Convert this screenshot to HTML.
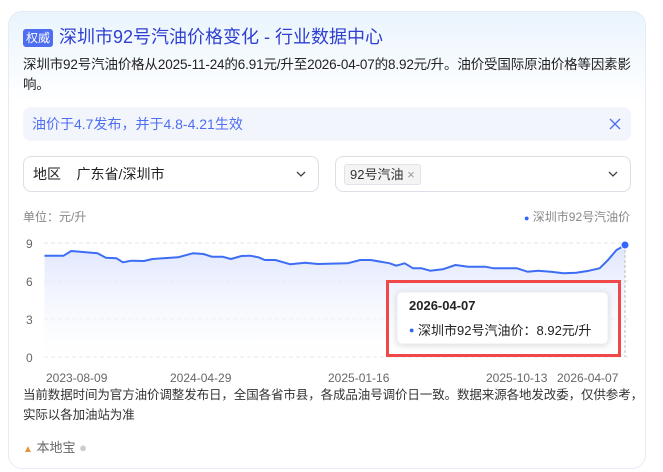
<!DOCTYPE html>
<html><head><meta charset="utf-8"><style>
*{margin:0;padding:0;box-sizing:border-box}
body{width:663px;height:472px;background:#fff;font-family:"Liberation Sans","Noto Sans CJK SC",sans-serif;position:relative;overflow:hidden;color:#222}
.card{position:absolute;left:8px;top:11px;width:638px;height:458px;border:1px solid #e6ebf5;border-radius:14px;background:linear-gradient(180deg,#eaf4fd 0,#fff 90px)}
.a{position:absolute;white-space:nowrap}
.badge{left:23px;top:29px;background:#4e6ef2;color:#fff;font-size:12px;padding:1px 3px;border-radius:3px;line-height:16px}
.title{left:59px;top:25px;font-size:18px;color:#2f3fd0;line-height:24px}
.desc{left:23px;top:55px;font-size:13.5px;line-height:20px;color:#222;letter-spacing:-0.15px}
.notice{left:23px;top:107px;width:608px;height:34px;background:#f3f5fc;border-radius:8px;color:#4e6ef2;font-size:14px;line-height:34px;padding-left:9px}
.sel{top:156px;height:36px;border:1px solid #dcdfe6;border-radius:8px;background:#fff;font-size:14px;line-height:34px}
.tag{position:absolute;left:8px;top:7px;height:21px;line-height:19px;background:#f4f4f5;border:1px solid #e1e3e8;border-radius:3px;font-size:13px;padding:0 5px;color:#333}
.ax{font-size:12px;color:#666}
</style></head><body>
<div class="card"></div>
<div class="a badge">权威</div>
<div class="a title">深圳市92号汽油价格变化 - 行业数据中心</div>
<div class="a desc">深圳市92号汽油价格从2025-11-24的6.91元/升至2026-04-07的8.92元/升。油价受国际原油价格等因素影<br>响。</div>
<div class="a notice">油价于4.7发布，并于4.8-4.21生效
<svg style="position:absolute;right:10px;top:11px" width="12" height="12"><path d="M1 1L11 11M11 1L1 11" stroke="#4e6ef2" stroke-width="1.4"/></svg></div>
<div class="a sel" style="left:23px;width:296px;padding-left:9px">地区&nbsp;&nbsp;&nbsp;&nbsp;广东省/深圳市
<svg style="position:absolute;right:12px;top:14px" width="10" height="7"><path d="M1 1L5 5L9 1" stroke="#444" fill="none" stroke-width="1.3"/></svg></div>
<div class="a sel" style="left:335px;width:296px"><span class="tag">92号汽油 <span style="color:#999">×</span></span>
<svg style="position:absolute;right:12px;top:14px" width="10" height="7"><path d="M1 1L5 5L9 1" stroke="#444" fill="none" stroke-width="1.3"/></svg></div>
<div class="a ax" style="left:23px;top:208px;color:#888">单位：元/升</div>
<div class="a ax" style="left:524px;top:208px;color:#888"><span style="color:#3366ff;font-size:9px">●</span> 深圳市92号汽油价</div>
<div class="a ax" style="left:26px;top:237px">9</div>
<div class="a ax" style="left:26px;top:275px">6</div>
<div class="a ax" style="left:26px;top:313px">3</div>
<div class="a ax" style="left:26px;top:351px">0</div>
<svg class="a" style="left:0;top:0" width="663" height="472">
<defs><linearGradient id="g" x1="0" y1="0" x2="0" y2="1"><stop offset="0" stop-color="#dfe6fd"/><stop offset="1" stop-color="#fff" stop-opacity="0.3"/></linearGradient></defs>
<g stroke="#e6e6e6" stroke-dasharray="4 3"><line x1="44" y1="243" x2="628" y2="243"/><line x1="44" y1="281" x2="628" y2="281"/><line x1="44" y1="319" x2="628" y2="319"/><line x1="44" y1="357" x2="628" y2="357"/></g>
<path d="M44.5,255.7 L63.6,255.7 71.2,251 97.5,253.3 105.9,257.7 116.5,258.3 122.9,262.3 131.4,260.7 144.1,261 152.5,259 178,257.3 192.8,253.3 203.4,254 211.9,256.7 222.5,256.7 230.9,259 241.5,256 250,255.7 258.5,257.3 264.8,260 275.4,260 290.3,264.3 305.1,262.7 317.8,264 347.5,263.3 360.2,260 370.8,260 389.8,263.3 396.2,265.7 404.7,263.3 413.1,268.3 421.6,268.3 430.1,270.7 442.8,269.3 455.5,265 468.2,266.7 485.2,266.7 493.6,268.3 517,268.3 527.5,271.7 538.1,270.7 550.8,271.7 563.6,273.3 576.3,272.7 589,270.7 599.6,268.3 608,260 616.5,250 625,245.3 L625,357 L44.5,357Z" fill="url(#g)"/>
<path d="M44.5,255.7 L63.6,255.7 71.2,251 97.5,253.3 105.9,257.7 116.5,258.3 122.9,262.3 131.4,260.7 144.1,261 152.5,259 178,257.3 192.8,253.3 203.4,254 211.9,256.7 222.5,256.7 230.9,259 241.5,256 250,255.7 258.5,257.3 264.8,260 275.4,260 290.3,264.3 305.1,262.7 317.8,264 347.5,263.3 360.2,260 370.8,260 389.8,263.3 396.2,265.7 404.7,263.3 413.1,268.3 421.6,268.3 430.1,270.7 442.8,269.3 455.5,265 468.2,266.7 485.2,266.7 493.6,268.3 517,268.3 527.5,271.7 538.1,270.7 550.8,271.7 563.6,273.3 576.3,272.7 589,270.7 599.6,268.3 608,260 616.5,250 625,245.3" fill="none" stroke="#3d6df5" stroke-width="2" stroke-linejoin="round"/>
<line x1="625" y1="245" x2="625" y2="357" stroke="#bbb" stroke-dasharray="3 2"/>
<circle cx="625" cy="245" r="4" fill="#3366ff" stroke="#fff" stroke-width="1"/>
<rect x="397" y="292" width="211" height="52" rx="5" fill="#fff" stroke="#eee" style="filter:drop-shadow(0 1px 3px rgba(0,0,0,.15))"/>
<rect x="387.5" y="281.5" width="232" height="74" fill="none" stroke="#f04848" stroke-width="3"/>
</svg>
<div class="a" style="left:409px;top:298px;font-size:13px;font-weight:bold;color:#222">2026-04-07</div>
<div class="a" style="left:409px;top:320px;font-size:13px;color:#222"><span style="color:#3366ff;font-size:9px;vertical-align:2px">●</span> 深圳市92号汽油价：8.92元/升</div>
<div class="a ax" style="left:46px;top:371px">2023-08-09</div>
<div class="a ax" style="left:170px;top:371px">2024-04-29</div>
<div class="a ax" style="left:328px;top:371px">2025-01-16</div>
<div class="a ax" style="left:486px;top:371px">2025-10-13</div>
<div class="a ax" style="left:557px;top:371px">2026-04-07</div>
<div class="a" style="left:23px;top:385px;font-size:12.5px;line-height:20px;color:#333;letter-spacing:-0.1px">当前数据时间为官方油价调整发布日，全国各省市县，各成品油号调价日一致。数据来源各地发改委，仅供参考，<br>实际以各加油站为准</div>
<div class="a" style="left:23px;top:437px;font-size:13px;color:#666"><span style="color:#e8923a;font-size:10px">▲</span> 本地宝 <span style="color:#ccc">●</span></div>
</body></html>
